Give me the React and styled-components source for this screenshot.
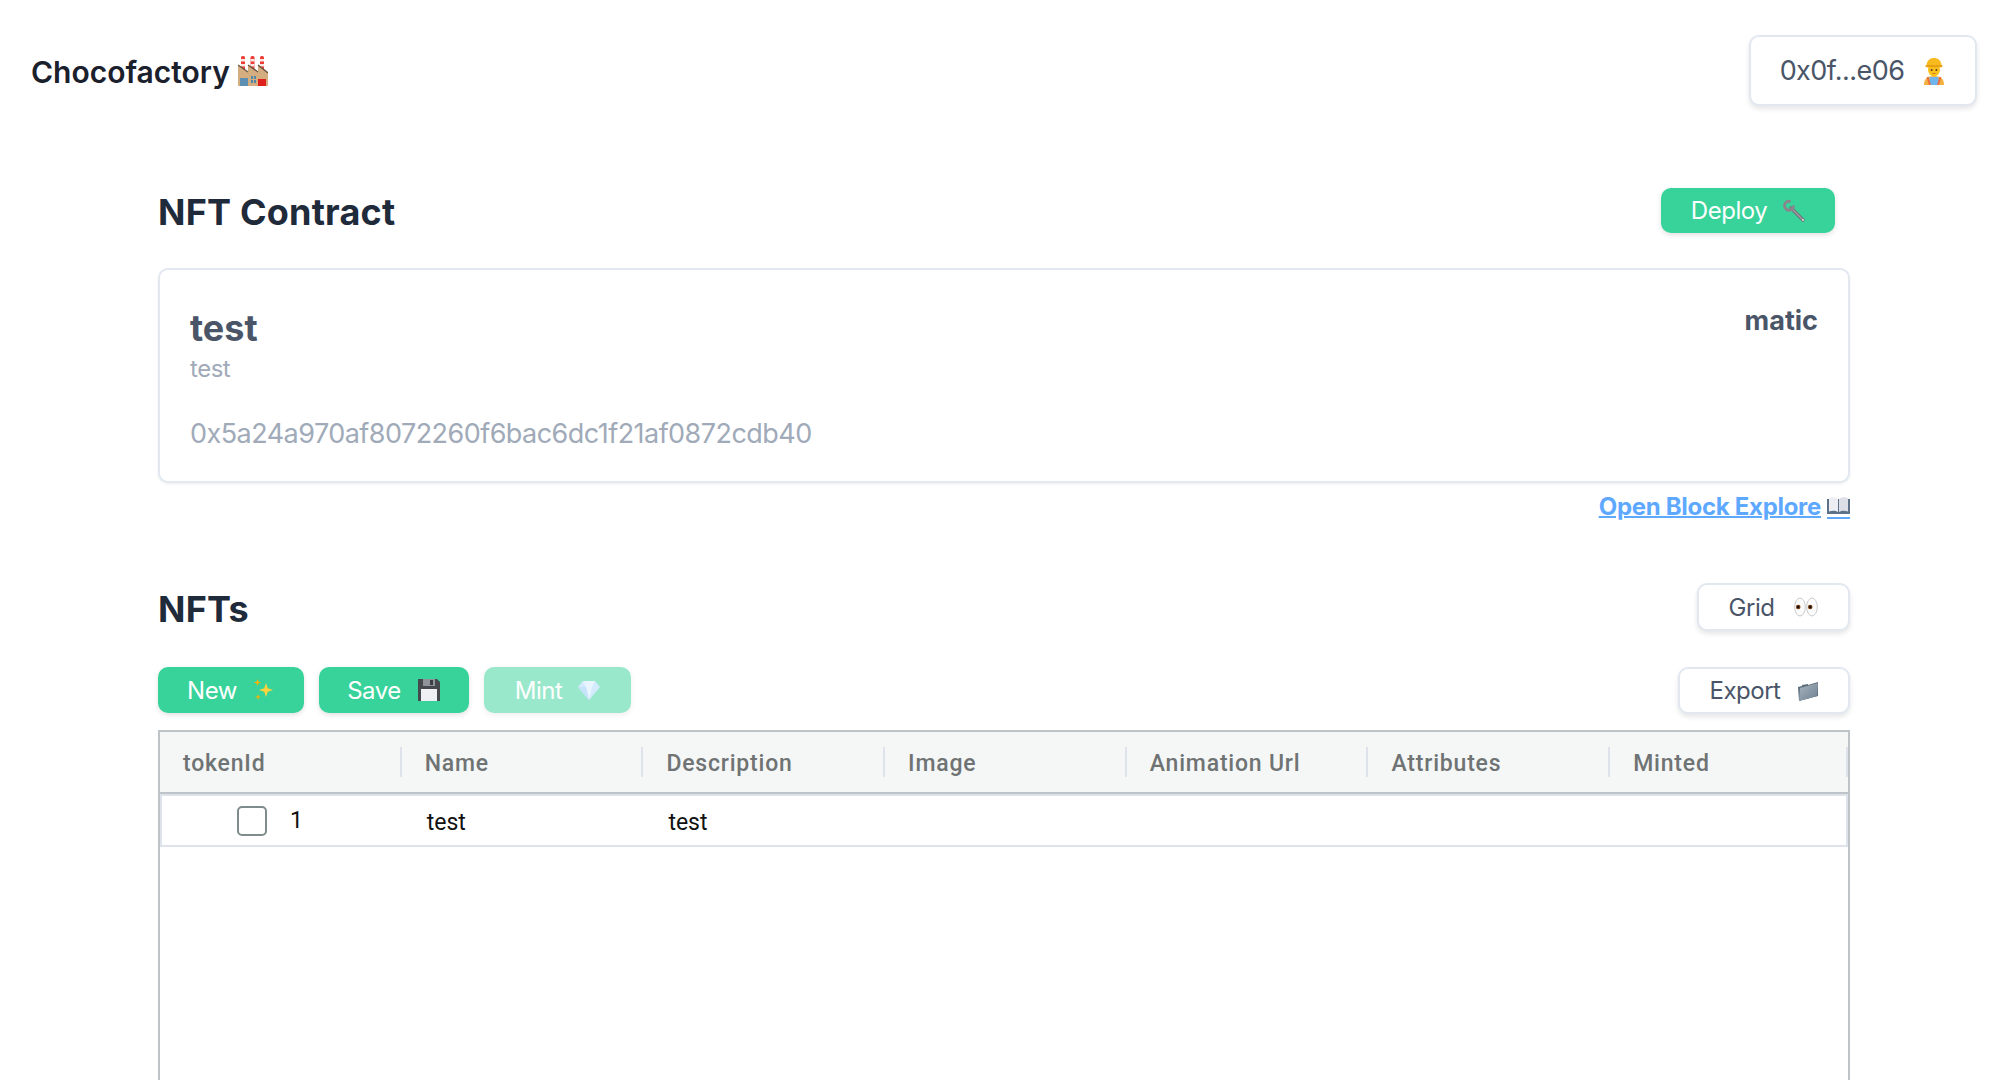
import React from "react";
import styled, { createGlobalStyle, css } from "styled-components";

const GlobalStyle = createGlobalStyle`
  html, body {
    margin: 0;
    height: 1080px;
    overflow: hidden;
    background: #fff;
    font-family: Inter, "Noto Sans", sans-serif;
  }
  * { box-sizing: border-box; }
`;

const chimneys = [3, 12.5, 22];

const Factory = () => (
  <svg width="30" height="30" viewBox="0 0 30 30">
    {chimneys.map((x) => (
      <g key={x}>
        <rect x={x} y="0" width="4" height="14" rx="1.500" fill="#ee3b36" />
        <rect x={x} y="3" width="4" height="2.500" fill="#f7e9e4" />
        <rect x={x} y="8" width="4" height="2.500" fill="#f7e9e4" />
      </g>
    ))}
    <path d="M0 9l10 7V9l10 7V9l10 8v13H0z" fill="#d4ae7e" />
    <path d="M0 9l10 7M10 9l10 7M20 9l10 8" stroke="#6b5442" strokeWidth="1.400" fill="none" />
    <rect x="2" y="22" width="8" height="8" fill="#5d8fb2" />
    <rect x="13" y="20" width="2" height="3" fill="#4f86ad" />
    <rect x="16" y="20" width="2" height="3" fill="#4f86ad" />
    <rect x="13" y="24" width="2" height="3" fill="#4f86ad" />
    <rect x="16" y="24" width="2" height="3" fill="#4f86ad" />
    <rect x="20" y="23" width="8" height="7" fill="#e0201c" />
  </svg>
);

const Worker = () => (
  <svg width="24" height="28" viewBox="0 0 24 28">
    <path d="M2 28c0-6 3-9 10-9s10 3 10 9z" fill="#f4b13f" />
    <rect x="7.500" y="20" width="9" height="8" fill="#6fb4ea" />
    <path d="M5.500 20l2.500 8M18.500 20L16 28" stroke="#ee6a3a" strokeWidth="1.800" />
    <ellipse cx="12" cy="13" rx="6" ry="6.500" fill="#fcc21b" />
    <circle cx="9.600" cy="13" r="1" fill="#5b3a1e" />
    <circle cx="14.400" cy="13" r="1" fill="#5b3a1e" />
    <path d="M10.500 16.500h3" stroke="#c9781c" strokeWidth="1" />
    <path d="M4.500 9C4.500 3.500 8 1 12 1s7.500 2.500 7.500 8z" fill="#f8bb1f" />
    <rect x="3.500" y="8" width="17" height="2.200" rx="1" fill="#e6a012" />
  </svg>
);

const Wrench = () => (
  <svg width="22" height="24" viewBox="0 0 22 24">
    <path d="M8 9l12 12" stroke="#6f6a72" strokeWidth="3.200" strokeLinecap="round" />
    <path d="M8 9l12 12" stroke="#a7a0aa" strokeWidth="1.200" strokeLinecap="round" />
    <path d="M7.500 2.500A4.500 4.500 0 1 0 10.500 6.500" stroke="#8a858c" strokeWidth="2.800" fill="none" />
    <circle cx="20" cy="21" r="0.900" fill="#e8e8e8" />
  </svg>
);

const Book = () => (
  <svg width="23" height="26" viewBox="0 0 23 26">
    <rect x="0" y="5" width="23" height="15" fill="#5d7288" />
    <path d="M2 4c3-1 6.500-1 9 1v13c-2.500-1.500-6-1.500-9-.5z" fill="#eceef4" />
    <path d="M21 4c-3-1-6.500-1-9 1v13c2.500-1.500 6-1.500 9-.5z" fill="#dcdfe8" />
    <rect x="-6" y="23" width="29" height="2" fill="#5ea9ff" />
  </svg>
);

const Eyes = () => (
  <svg width="24" height="20" viewBox="0 0 24 20">
    <ellipse cx="6" cy="10" rx="5.300" ry="9" fill="#fbfbfb" stroke="#c4c4c4" strokeWidth="0.900" />
    <ellipse cx="18" cy="10" rx="5.300" ry="9" fill="#fbfbfb" stroke="#c4c4c4" strokeWidth="0.900" />
    <circle cx="4.200" cy="10" r="2.300" fill="#7a3d0e" />
    <circle cx="16.200" cy="10" r="2.300" fill="#7a3d0e" />
    <circle cx="4.200" cy="10" r="1.200" fill="#111" />
    <circle cx="16.200" cy="10" r="1.200" fill="#111" />
  </svg>
);

const Folder = () => (
  <svg width="22" height="22" viewBox="0 0 22 22">
    <defs>
      <linearGradient id="folderFill" x1="0" y1="0" x2="1" y2="1">
        <stop offset="0" stopColor="#a8b4bf" />
        <stop offset="1" stopColor="#6f8090" />
      </linearGradient>
    </defs>
    <path d="M1 7l4-1V5l6-1v1l10-3v14L2 21z" fill="#5c6d7c" />
    <path d="M3 8l18-5-1 13L2 21z" fill="url(#folderFill)" />
  </svg>
);

const Sparkles = () => (
  <svg width="22" height="22" viewBox="0 0 22 22">
    <path d="M13 4l1.800 5.200L20 11l-5.200 1.800L13 18l-1.800-5.200L6 11l5.200-1.800z" fill="#fbd33d" />
    <path d="M4.500 0l.9 2.600L8 3.500l-2.600.9L4.500 7l-.9-2.600L1 3.500l2.600-.9z" fill="#f7b500" />
    <path d="M5 15l.7 2.300L8 18l-2.300.7L5 21l-.7-2.300L2 18l2.300-.7z" fill="#f7b500" />
  </svg>
);

const Floppy = () => (
  <svg width="24" height="24" viewBox="0 0 24 24">
    <path d="M1 1h19l3 3v19H1z" fill="#46494e" />
    <rect x="6" y="1" width="12" height="7" fill="#8f949a" />
    <rect x="13" y="2" width="3" height="5" fill="#3a3d41" />
    <rect x="4" y="11" width="16" height="12" fill="#eef0f4" />
  </svg>
);

const Gem = () => (
  <svg width="22" height="20" viewBox="0 0 22 20">
    <path d="M5 1h12l5 6-11 13L0 7z" fill="#a9d8fb" />
    <path d="M5 1l3 6h6l3-6zM8 7l3 13 3-13z" fill="#d4edfe" />
    <path d="M0 7h8l3 13z" fill="#8cc8f5" />
  </svg>
);

const Page = styled.div`
  height: 1080px;
  overflow: hidden;
  color: #1a202c;
`;

const Header = styled.header`
  display: flex;
  justify-content: space-between;
  align-items: center;
  padding: 35px 23px 0 31px;
`;

const Brand = styled.div`
  display: flex;
  align-items: center;
  gap: 8px;
  font-size: 30px;
  line-height: 40px;
  font-weight: 600;
  padding-top: 2px;
  svg { margin-top: -1px; }
`;

const Main = styled.main`
  margin: 0 150px 0 158px;
  padding-top: 82px;
`;

const SectionHead = styled.div`
  display: flex;
  justify-content: space-between;
  align-items: flex-start;
  height: 48px;
`;

const SectionTitle = styled.h2`
  margin: 0;
  font-size: 36px;
  line-height: 48px;
  font-weight: 700;
  letter-spacing: 0.2px;
  color: #1f2a3a;
`;

const Button = styled.button`
  display: inline-flex;
  align-items: center;
  justify-content: center;
  font-family: inherit;
  font-size: 24px;
  letter-spacing: -0.02em;
  line-height: 32px;
  border-radius: 10px;
  padding: 0;
  cursor: pointer;
  ${({ $w, $h = 45, $gap }) => css`
    width: ${$w}px;
    height: ${$h}px;
    gap: ${$gap}px;
  `}
  ${({ $low }) =>
    $low &&
    css`
      padding-top: 2px;
      svg { margin-top: -2px; }
    `}
`;

const GreenButton = styled(Button)`
  border: none;
  color: #fff;
  background: #38d39a;
  box-shadow: 0 2px 5px rgba(0, 0, 0, 0.12);
  opacity: ${({ disabled }) => (disabled ? 0.5 : 1)};
`;

const WhiteButton = styled(Button)`
  color: #4a5568;
  background: #fff;
  border: 2px solid #e2e8f0;
  box-shadow: 0 3px 5px rgba(0, 0, 0, 0.1);
`;

const WalletButton = styled(WhiteButton)`
  font-size: 27px;
`;

const DeployButton = styled(GreenButton)`
  margin-right: 15px;
`;

const Card = styled.section`
  margin-top: 32px;
  height: 215px;
  border: 2px solid #e2e8f0;
  border-radius: 10px;
  box-shadow: 0 1px 3px rgba(0, 0, 0, 0.08);
  padding: 38px 30px 0;
  display: flex;
  justify-content: space-between;
`;

const CardName = styled.div`
  font-size: 36px;
  line-height: 40px;
  font-weight: 700;
  color: #4a5568;
`;

const CardSymbol = styled.div`
  font-size: 24px;
  line-height: 32px;
  letter-spacing: -0.02em;
  color: #a0aab8;
  margin-top: 5px;
`;

const CardAddress = styled.div`
  font-size: 27px;
  line-height: 32px;
  letter-spacing: -0.02em;
  color: #a0aab8;
  margin-top: 33px;
`;

const CardNetwork = styled.div`
  font-size: 27px;
  line-height: 36px;
  font-weight: 700;
  color: #4a5568;
  margin-top: -5px;
`;

const LinkRow = styled.div`
  display: flex;
  justify-content: flex-end;
  margin-top: 8px;
  height: 31px;
`;

const ExploreLink = styled.a`
  display: inline-flex;
  align-items: center;
  gap: 6px;
  font-size: 24px;
  line-height: 30px;
  font-weight: 700;
  letter-spacing: -0.3px;
  color: #5ea9ff;
  text-decoration: underline;
  text-decoration-thickness: 2px;
`;

const NftHead = styled(SectionHead)`
  margin-top: 61px;

  ${SectionTitle} {
    padding-top: 2px;
  }
`;

const Toolbar = styled.div`
  display: flex;
  justify-content: space-between;
  margin-top: 36px;
`;

const ButtonGroup = styled.div`
  display: flex;
  gap: 15px;
`;

const Table = styled.div`
  margin-top: 16px;
  height: 500px;
  border: 2px solid #bdc3c7;
  font-family: Roboto, Inter, sans-serif;
`;

const HeadRow = styled.div`
  display: grid;
  grid-template-columns: repeat(6, 241.7px) 1fr;
  height: 62px;
  align-items: center;
  background: #f5f7f7;
  border-bottom: 2px solid #bdc3c7;
`;

const HeadCell = styled.div`
  height: 30px;
  padding-left: 23px;
  font-size: 23px;
  font-weight: 500;
  line-height: 33px;
  letter-spacing: 0.8px;
  color: #6f7373;
  border-right: 2px solid #dde2eb;
`;

const BodyRow = styled.div`
  display: grid;
  grid-template-columns: repeat(6, 241.7px) 1fr;
  height: 53px;
  align-items: center;
  border: 2px solid #dde2eb;
  font-size: 23px;
  color: #111;
`;

const TokenCell = styled.div`
  display: flex;
  align-items: center;
  gap: 23px;
  padding-left: 75px;
  line-height: 32px;
`;

const Check = styled.span`
  width: 30px;
  height: 30px;
  border: 2px solid #7f8c8d;
  border-radius: 5px;
  background: #fff;
`;

const BodyCell = styled.div`
  padding-left: 23px;
  line-height: 30px;
  padding-top: 5px;
`;

const headers = ["tokenId", "Name", "Description", "Image", "Animation Url", "Attributes", "Minted"];

const App = () => (
  <Page>
    <GlobalStyle />
    <Header>
      <Brand>
        Chocofactory <Factory />
      </Brand>
      <WalletButton $w={228} $h={71} $gap={18}>
        0x0f...e06 <Worker />
      </WalletButton>
    </Header>
    <Main>
      <SectionHead>
        <SectionTitle>NFT Contract</SectionTitle>
        <DeployButton $w={174} $gap={16}>
          Deploy <Wrench />
        </DeployButton>
      </SectionHead>
      <Card>
        <div>
          <CardName>test</CardName>
          <CardSymbol>test</CardSymbol>
          <CardAddress>0x5a24a970af8072260f6bac6dc1f21af0872cdb40</CardAddress>
        </div>
        <CardNetwork>matic</CardNetwork>
      </Card>
      <LinkRow>
        <ExploreLink href="#">
          Open Block Explore <Book />
        </ExploreLink>
      </LinkRow>
      <NftHead>
        <SectionTitle>NFTs</SectionTitle>
        <WhiteButton $w={153} $h={48} $gap={20} $low>
          Grid <Eyes />
        </WhiteButton>
      </NftHead>
      <Toolbar>
        <ButtonGroup>
          <GreenButton $w={146} $h={46} $gap={16} $low>
            New <Sparkles />
          </GreenButton>
          <GreenButton $w={150} $h={46} $gap={16} $low>
            Save <Floppy />
          </GreenButton>
          <GreenButton $w={147} $h={46} $gap={16} $low disabled>
            Mint <Gem />
          </GreenButton>
        </ButtonGroup>
        <WhiteButton $w={172} $h={47} $gap={16}>
          Export <Folder />
        </WhiteButton>
      </Toolbar>
      <Table>
        <HeadRow>
          {headers.map((h) => (
            <HeadCell key={h}>{h}</HeadCell>
          ))}
        </HeadRow>
        <BodyRow>
          <TokenCell>
            <Check />1
          </TokenCell>
          <BodyCell>test</BodyCell>
          <BodyCell>test</BodyCell>
        </BodyRow>
      </Table>
    </Main>
  </Page>
);

export default App;
